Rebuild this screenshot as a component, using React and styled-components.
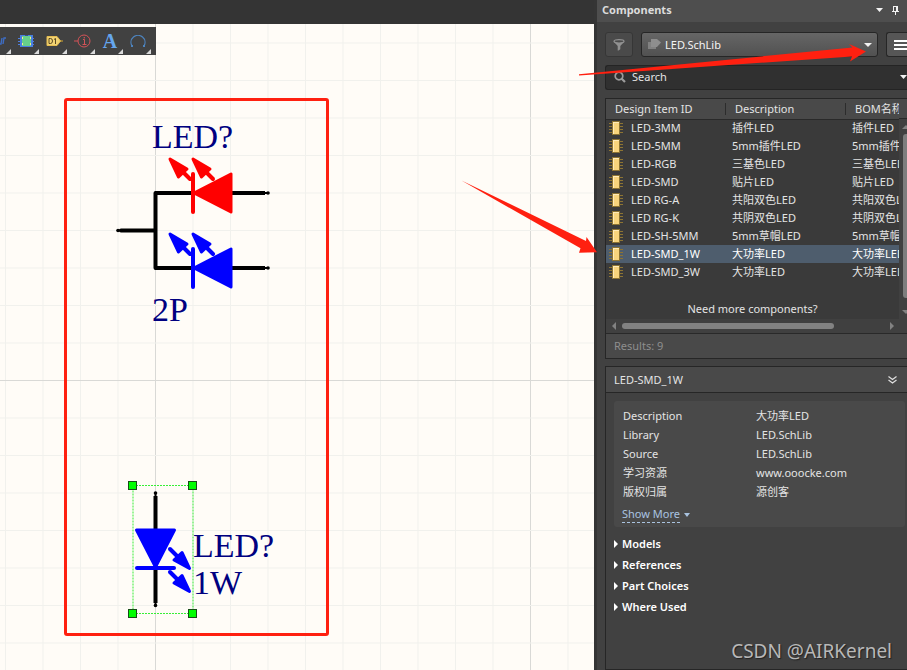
import React from "react";
import styled, { createGlobalStyle } from "styled-components";

const UI_FONT = '"Noto Sans", "Noto Sans CJK SC", sans-serif';

const GlobalStyle = createGlobalStyle`
  *, *::before, *::after { box-sizing: border-box; }
  body { margin: 0; background: #343434; font-family: ${UI_FONT}; }
  button, input, select { font: inherit; color: inherit; margin: 0; }
`;

const Page = styled.div`
  position: relative;
  display: grid;
  grid-template-columns: minmax(0, 1fr) 313px;
  min-height: 100vh;
  overflow: hidden;
  font-size: 11px;
  line-height: 18px;
  color: #e4e4e4;
`;

/* ---------- Editor ---------- */

const Editor = styled.main`
  display: flex;
  flex-direction: column;
  border-top: 24px solid #343434;
`;

const Canvas = styled.div`
  position: relative;
  flex: 1;
  overflow: hidden;
  background: #fffcf7;
`;

const Drawing = styled.svg`
  position: absolute;
  top: -24px;
  left: 0;
  width: 100%;
  height: calc(100% + 24px);

  text {
    font-family: "Liberation Serif", serif;
    font-size: 34px;
    fill: #000080;
  }
`;

const Toolbar = styled.div`
  position: absolute;
  top: 3px;
  left: 0;
  display: flex;
  height: 28px;
  padding-right: 4px;
  background: #414141;
`;

const Tool = styled.button`
  position: relative;
  display: flex;
  align-items: center;
  justify-content: ${(p) => (p.$clipped ? "flex-start" : "center")};
  width: ${(p) => (p.$clipped ? "12px" : "28px")};
  padding: 0;
  border: 0;
  background: none;
  overflow: hidden;

  &::after {
    content: "";
    position: absolute;
    right: 1px;
    bottom: 1px;
    border-left: 5px solid transparent;
    border-bottom: 5px solid #dadada;
  }
`;

/* ---------- Components panel ---------- */

const Panel = styled.aside`
  display: flex;
  flex-direction: column;
  min-width: 0;
  border-left: 3px solid #353535;
  background: #414141;
`;

const TitleBar = styled.header`
  display: flex;
  align-items: center;
  gap: 9px;
  height: 22px;
  padding: 0 8px 2px 5px;
  background: #4e4e4e;
`;

const Title = styled.h1`
  flex: 1;
  margin: 0;
  font-size: 11px;
  font-weight: 700;
  color: #dcdcdc;
`;

const PlainButton = styled.button`
  display: flex;
  padding: 0;
  border: 0;
  background: none;
`;

const Controls = styled.div`
  display: flex;
  gap: 8px;
  padding: 10px 0 8px 8px;
`;

const SquareButton = styled.button`
  display: flex;
  align-items: center;
  justify-content: ${(p) => (p.$cut ? "flex-start" : "center")};
  width: ${(p) => (p.$cut ? "21px" : "28px")};
  height: 25px;
  padding: ${(p) => (p.$cut ? "0 0 0 7px" : "0")};
  border: 1px solid ${(p) => (p.$cut ? "#262626" : "#363636")};
  border-right-width: ${(p) => (p.$cut ? "0" : "1px")};
  border-radius: ${(p) => (p.$cut ? "3px 0 0 3px" : "3px")};
  background: ${(p) => (p.$cut ? "#565656" : "#4a4a4a")};
`;

const LibraryBox = styled.label`
  position: relative;
  display: flex;
  align-items: center;
  flex: 1;
  height: 25px;
  border: 1px solid #262626;
  border-radius: 3px;
  background: linear-gradient(#666, #515151);

  > svg {
    position: absolute;
    left: 6px;
    pointer-events: none;
  }

  > svg:last-child {
    left: auto;
    right: 5px;
  }
`;

const LibrarySelect = styled.select`
  width: 100%;
  height: 100%;
  padding: 0 20px 0 23px;
  border: 0;
  appearance: none;
  background: transparent;
  color: #f4f4f4;
`;

const SearchBox = styled.label`
  display: flex;
  align-items: center;
  gap: 6px;
  height: 25px;
  margin-left: 8px;
  padding: 0 0 1px 8px;
  border: 1px solid #242424;
  border-right: 0;
  border-radius: 3px 0 0 3px;
  background: #303030;
  overflow: hidden;
`;

const SearchInput = styled.input`
  flex: 1;
  min-width: 0;
  padding: 0;
  border: 0;
  outline: 0;
  background: none;

  &::placeholder { color: #e4e4e4; opacity: 1; }
`;

const ListFrame = styled.section`
  display: flex;
  flex-direction: column;
  margin: 8px 0 7px 8px;
  border: 1px solid #262626;
  border-right: 0;
  background: #3a3a3a;
`;

const ListBody = styled.div`
  display: grid;
  grid-template-columns: minmax(0, 1fr) 8px;
`;

const ListMain = styled.div`
  min-width: 0;
`;

const ItemTable = styled.table`
  width: 100%;
  border-collapse: collapse;
  table-layout: fixed;
`;

const HeadCell = styled.th`
  position: relative;
  width: ${(p) => (p.$fill ? "auto" : "120px")};
  height: 20px;
  padding: 0 0 0 9px;
  border-bottom: 1px solid #292929;
  background: #494949;
  font-weight: 400;
  text-align: left;
  white-space: nowrap;
  overflow: hidden;

  &::after {
    content: "";
    position: absolute;
    top: 4px;
    right: 0;
    width: ${(p) => (p.$fill ? "0" : "1px")};
    height: 12px;
    background: #2c2c2c;
  }
`;

const ItemRow = styled.tr`
  background: ${(p) => (p.$selected ? "#4e5d6d" : "transparent")};
  color: ${(p) => (p.$selected ? "#fff" : "#e4e4e4")};
`;

const ItemCell = styled.td`
  height: 18px;
  padding: 0 0 0 6px;
  line-height: 16px;
  white-space: nowrap;
  overflow: hidden;
`;

const ItemName = styled.div`
  display: flex;
  align-items: center;
  gap: 8px;
  margin-left: -3px;
`;

const MoreNote = styled.p`
  margin: 19px 0 0;
  padding-bottom: 1px;
  text-align: center;
`;

const VerticalScroll = styled.div`
  display: flex;
  flex-direction: column;
  align-items: flex-start;
  padding: 26px 0 5px 3px;
  background: linear-gradient(#494949 0 19px, #292929 19px 20px, #404040 20px);
  overflow: hidden;
`;

const VerticalThumb = styled.div`
  flex: 1;
  width: 6px;
  margin: 5px 0 12px 1px;
  border-radius: 3px 0 0 3px;
  background: #7d7d7d;
`;

const HorizontalScroll = styled.div`
  display: flex;
  align-items: center;
  gap: 6px;
  height: 14px;
  padding: 0 13px 0 6px;
  background: #404040;
`;

const HorizontalTrack = styled.div`
  flex: 1;
`;

const HorizontalThumb = styled.div`
  width: 81%;
  height: 6px;
  border-radius: 3px;
  background: #828282;
`;

const Results = styled.div`
  height: 25px;
  padding: 3px 8px;
  border-top: 1px solid #292929;
  background: #494949;
  color: #8e8e8e;
`;

const Details = styled.section`
  flex: 1;
  margin-left: 8px;
  border: 1px solid #262626;
  border-right: 0;
`;

const DetailsHead = styled.header`
  display: flex;
  align-items: center;
  justify-content: space-between;
  height: 26px;
  padding: 0 10px 0 8px;
  border-bottom: 1px solid #262626;
  background: #494949;
`;

const DetailsTitle = styled.h2`
  margin: 0;
  font-size: 11px;
  font-weight: 400;
`;

const Card = styled.div`
  margin: 8px 2px 6px 8px;
  padding: 5px 8px 4px 9px;
  border-radius: 3px;
  background: #494949;
`;

const Properties = styled.dl`
  display: grid;
  grid-template-columns: 133px 1fr;
  grid-auto-rows: 19px;
  align-items: center;
  margin: 0;

  dd { margin: 0; }
`;

const ShowMore = styled.a`
  display: inline-flex;
  align-items: center;
  gap: 4px;
  margin: 5px 0 0 -1px;
  line-height: 16px;
  color: #a9c3e0;
  text-decoration: none;

  span { border-bottom: 1px dashed #a9c3e0; }
`;

const SectionButton = styled.button`
  display: flex;
  align-items: center;
  gap: 4px;
  width: 100%;
  height: 21px;
  padding: 0 0 0 8px;
  border: 0;
  background: none;
  font-weight: 600;
  color: #fff;
`;

/* ---------- Overlays ---------- */

const Annotations = styled.svg`
  position: absolute;
  top: 0;
  left: 0;
  width: 100%;
  height: 100%;
  pointer-events: none;
`;

const Watermark = styled.div`
  position: absolute;
  right: 15px;
  bottom: 5px;
  font-size: 19px;
  line-height: 28px;
  color: #b8b8b8;
  text-shadow: 1px 1px 1px #222;
`;

/* ---------- Icons ---------- */

const Caret = ({ width = 8, height = 4, color = "#f2f2f2", up }) => (
  <svg width={width} height={height} viewBox="0 0 8 4" preserveAspectRatio="none" aria-hidden="true">
    <path d={up ? "M0 4h8L4 0z" : "M0 0h8L4 4z"} fill={color} />
  </svg>
);

const SideArrow = ({ left, color = "#fff", width = 4, height = 8 }) => (
  <svg width={width} height={height} viewBox="0 0 4 8" aria-hidden="true">
    <path d={left ? "M4 0v8L0 4z" : "M0 0v8l4-4z"} fill={color} />
  </svg>
);

const ChipIcon = () => (
  <svg width="14" height="14" viewBox="0 0 14 14" shapeRendering="crispEdges" aria-hidden="true">
    <path d="M0 2.5h14M0 5.5h14M0 8.5h14M0 11.5h14" stroke="#8d7433" />
    <rect x="3" y="0" width="8" height="14" fill="#8d7433" />
    <rect x="4" y="1" width="6" height="12" fill="#f8d47c" />
    <path d="M4 1h6v1H5v11H4z" fill="#ffebb9" />
  </svg>
);

const PinIcon = () => (
  <svg width="7" height="9" viewBox="0 0 7 9" shapeRendering="crispEdges" aria-hidden="true">
    <path d="M1 0h5v5h1v1H4v3H3V6H0V5h1zM2 1v4h2V1z" fill="#f2f2f2" fillRule="evenodd" />
  </svg>
);

const BusIcon = () => (
  <svg width="8" height="16" viewBox="0 0 8 16" aria-hidden="true">
    <path d="M0 11h1l1-6M3 11l1-6h2" fill="none" stroke="#3e6dc4" strokeWidth="1.4" />
  </svg>
);

const PartIcon = () => (
  <svg width="16" height="12" viewBox="0 0 16 12" shapeRendering="crispEdges" aria-hidden="true">
    <path d="M0 3h16M0 6h16M0 9h16" stroke="#4e7fe0" />
    <rect x="2" y="0" width="13" height="12" fill="#4a7de2" />
    <rect x="4" y="1" width="9" height="10" fill="#67cf8b" />
    <path d="M4 2h1v2H4zM12 2h1v2h-1zM4 8h1v2H4zM12 8h1v2h-1z" fill="#f6ee87" />
    <path d="M7 0h3v1H7z" fill="#35508f" />
  </svg>
);

const PortIcon = () => (
  <svg width="17" height="10" viewBox="0 0 17 10" aria-hidden="true">
    <path d="M12 5h5" stroke="#d7a92e" />
    <path d="M1 .5h10L14.500 5 11 9.500H1z" fill="#f2d373" stroke="#e5bc50" />
    <path d="M3 2.500h1.500q2 0 2 2.500t-2 2.500H3zM8 3.500l1.500-1V8" fill="none" stroke="#5b4820" />
  </svg>
);

const DirectiveIcon = () => (
  <svg width="17" height="14" viewBox="0 0 17 14" aria-hidden="true">
    <circle cx="10" cy="7" r="6" fill="none" stroke="#d55358" />
    <path d="M0 7h4M9 5.500h1.500v5M8.500 10.500h4" fill="none" stroke="#d55358" />
    <circle cx="10.300" cy="3.700" r=".8" fill="#d55358" />
  </svg>
);

const Letter = styled.span`
  font: 700 20px/24px "Liberation Serif", serif;
  color: #65a6ee;
`;

const ArcIcon = () => (
  <svg width="16" height="12" viewBox="0 0 16 12" aria-hidden="true">
    <path d="M2 11A7 7 0 1 1 14 11" fill="none" stroke="#4d83bd" strokeWidth="1.200" />
    <path d="M1 10h2v2H1zM13 10h2v2h-2z" fill="#4d83bd" />
  </svg>
);

const FilterIcon = () => (
  <svg width="12" height="12" viewBox="0 0 12 12" aria-hidden="true">
    <path d="M.6 2.500L4.700 7v4.500h.8l1.800-1.300V7l4.100-4.500z" fill="#919191" />
    <ellipse cx="6" cy="2.300" rx="5" ry="1.700" fill="#4a4a4a" stroke="#919191" strokeWidth="1.200" />
  </svg>
);

const LibraryIcon = () => (
  <svg width="13" height="11" viewBox="0 0 13 11" aria-hidden="true">
    <path d="M0 3h8v7H0z" fill="#818181" />
    <path d="M3 0h6l4 3.500L9 8H3z" fill="#8e8e8e" />
  </svg>
);

const MenuIcon = () => (
  <svg width="13" height="10" viewBox="0 0 13 10" shapeRendering="crispEdges" aria-hidden="true">
    <path d="M0 1h13M0 5h13M0 9h13" stroke="#fff" strokeWidth="2" />
  </svg>
);

const SearchIcon = () => (
  <svg width="12" height="12" viewBox="0 0 12 12" aria-hidden="true">
    <circle cx="5" cy="5" r="3.800" fill="none" stroke="#9c9c9c" strokeWidth="1.700" />
    <path d="M7.500 7.500l3.500 3.500" stroke="#9c9c9c" strokeWidth="2.200" />
  </svg>
);

const ChevronsIcon = () => (
  <svg width="9" height="8" viewBox="0 0 9 8" aria-hidden="true">
    <path d="M.5.500l4 3 4-3M.5 4l4 3 4-3" fill="none" stroke="#e0e0e0" strokeWidth="1.200" />
  </svg>
);

/* ---------- Schematic ---------- */

const PITCH = 37.5;
const verticals = Array.from({ length: 60 }, (_, i) => ({ at: 5.5 + i * PITCH, major: i % 10 === 4 }));
const horizontals = Array.from({ length: 40 }, (_, i) => ({ at: 5.5 + i * PITCH, major: i % 10 === 0 && i > 0 }));
const gridColor = (major) => (major ? "#d9d9d6" : "#f1f1ed");

const LightArrow = ({ x, y, color }) => (
  <g transform={`translate(${x} ${y})`} fill={color} stroke={color} strokeLinecap="round" strokeLinejoin="round">
    <path d="M2 2l17 10-8.500 8z" strokeWidth="3" />
    <path d="M14 14l8 8" strokeWidth="4" />
  </g>
);

const HorizontalDiode = ({ y, color }) => (
  <g>
    <path d={`M155 ${y}h38M232 ${y}h33`} stroke="#000" strokeWidth="4" />
    <path d={`M264 ${y}h4`} stroke="#000" strokeWidth="2" />
    <circle cx="268" cy={y} r="1.800" />
    <path d={`M194 ${y}l37-19v38z`} fill={color} stroke={color} strokeWidth="3" strokeLinejoin="round" />
    <path d={`M193 ${y - 19}v38`} stroke={color} strokeWidth="4" strokeLinecap="round" />
    <LightArrow x={168} y={y - 36} color={color} />
    <LightArrow x={191} y={y - 36} color={color} />
  </g>
);

const DownArrow = ({ y }) => (
  <g transform={`translate(170 ${y})`} fill="#00f" stroke="#00f" strokeLinecap="round" strokeLinejoin="round">
    <path d="M0 0l7 7" strokeWidth="4" />
    <path d="M19.500 19.500L4 11l8-7.500z" strokeWidth="3" />
  </g>
);

const handles = [[133, 485], [193, 485], [133, 613], [193, 613]];

const Schematic = () => (
  <Drawing role="img" aria-label="LED schematic symbols">
    {verticals.map((l) => (
      <path key={`v${l.at}`} d={`M${l.at} 0v2000`} stroke={gridColor(l.major)} />
    ))}
    {horizontals.map((l) => (
      <path key={`h${l.at}`} d={`M0 ${l.at}h3000`} stroke={gridColor(l.major)} />
    ))}

    <rect x="65.500" y="99.500" width="262" height="535" rx="1.500" fill="none" stroke="#ff2010" strokeWidth="3" />

    <text x="152" y="148">LED?</text>
    <path d="M155.500 193v75M155 230.500h-34" fill="none" stroke="#000" strokeWidth="4" strokeLinecap="round" />
    <path d="M122 230.500h-4" stroke="#000" strokeWidth="2" />
    <circle cx="118" cy="230.500" r="1.800" />
    <HorizontalDiode y={193} color="#f00" />
    <HorizontalDiode y={268} color="#00f" />
    <text x="152" y="321">2P</text>

    <path d="M155.500 496v34M155.500 568v35" stroke="#000" strokeWidth="4" />
    <path d="M155.500 493v112" stroke="#000" strokeWidth="2" />
    <circle cx="155.500" cy="493" r="1.800" />
    <circle cx="155.500" cy="605.500" r="1.800" />
    <path d="M136.500 530h38l-19 37z" fill="#00f" stroke="#00f" strokeWidth="3" strokeLinejoin="round" />
    <path d="M137 568h37" stroke="#00f" strokeWidth="4" strokeLinecap="round" />
    <DownArrow y={549} />
    <DownArrow y={572} />
    <text x="193" y="557">LED?</text>
    <text x="193" y="594">1W</text>
    <rect x="133" y="485.500" width="60" height="128" fill="none" stroke="#38ee38" strokeDasharray="2 1" />
    {handles.map(([x, y]) => (
      <rect key={`${x}-${y}`} x={x - 4.5} y={y - 3.5} width="8" height="8" fill="#0f0" stroke="#174d17" />
    ))}
  </Drawing>
);

/* ---------- Data ---------- */

const items = [
  ["LED-3MM", "插件LED"],
  ["LED-5MM", "5mm插件LED"],
  ["LED-RGB", "三基色LED"],
  ["LED-SMD", "贴片LED"],
  ["LED RG-A", "共阳双色LED"],
  ["LED RG-K", "共阴双色LED"],
  ["LED-SH-5MM", "5mm草帽LED"],
  ["LED-SMD_1W", "大功率LED"],
  ["LED-SMD_3W", "大功率LED"],
];

const properties = [
  ["Description", "大功率LED"],
  ["Library", "LED.SchLib"],
  ["Source", "LED.SchLib"],
  ["学习资源", "www.ooocke.com"],
  ["版权归属", "源创客"],
];

const sections = ["Models", "References", "Part Choices", "Where Used"];

export default function App() {
  return (
    <>
      <GlobalStyle />
      <Page>
        <Editor>
          <Canvas>
            <Schematic />
            <Toolbar>
              <Tool $clipped aria-label="Bus"><BusIcon /></Tool>
              <Tool aria-label="Part"><PartIcon /></Tool>
              <Tool aria-label="Port"><PortIcon /></Tool>
              <Tool aria-label="Directive"><DirectiveIcon /></Tool>
              <Tool aria-label="Text"><Letter>A</Letter></Tool>
              <Tool aria-label="Arc"><ArcIcon /></Tool>
            </Toolbar>
          </Canvas>
        </Editor>

        <Panel>
          <TitleBar>
            <Title>Components</Title>
            <PlainButton aria-label="Panel menu"><Caret width={7} /></PlainButton>
            <PlainButton aria-label="Pin panel"><PinIcon /></PlainButton>
          </TitleBar>

          <Controls>
            <SquareButton aria-label="Filter"><FilterIcon /></SquareButton>
            <LibraryBox>
              <LibraryIcon />
              <LibrarySelect aria-label="Library" defaultValue="LED.SchLib">
                <option>LED.SchLib</option>
              </LibrarySelect>
              <Caret />
            </LibraryBox>
            <SquareButton $cut aria-label="Options"><MenuIcon /></SquareButton>
          </Controls>

          <SearchBox>
            <SearchIcon />
            <SearchInput type="text" placeholder="Search" aria-label="Search" />
            <Caret width={7} />
          </SearchBox>

          <ListFrame>
            <ListBody>
              <ListMain>
                <ItemTable>
                  <thead>
                    <tr>
                      <HeadCell>Design Item ID</HeadCell>
                      <HeadCell>Description</HeadCell>
                      <HeadCell $fill>BOM名称</HeadCell>
                    </tr>
                  </thead>
                  <tbody>
                    {items.map(([name, text]) => (
                      <ItemRow key={name} $selected={name === "LED-SMD_1W"}>
                        <ItemCell><ItemName><ChipIcon />{name}</ItemName></ItemCell>
                        <ItemCell>{text}</ItemCell>
                        <ItemCell>{text}</ItemCell>
                      </ItemRow>
                    ))}
                  </tbody>
                </ItemTable>
                <MoreNote>Need more components?</MoreNote>
              </ListMain>
              <VerticalScroll>
                <Caret up color="#828282" />
                <VerticalThumb />
                <Caret color="#828282" />
              </VerticalScroll>
            </ListBody>
            <HorizontalScroll>
              <SideArrow left color="#828282" />
              <HorizontalTrack><HorizontalThumb /></HorizontalTrack>
              <SideArrow color="#828282" />
            </HorizontalScroll>
            <Results>Results: 9</Results>
          </ListFrame>

          <Details>
            <DetailsHead>
              <DetailsTitle>LED-SMD_1W</DetailsTitle>
              <PlainButton aria-label="Collapse details"><ChevronsIcon /></PlainButton>
            </DetailsHead>
            <Card>
              <Properties>
                {properties.map(([label, value]) => (
                  <React.Fragment key={label}>
                    <dt>{label}</dt>
                    <dd>{value}</dd>
                  </React.Fragment>
                ))}
              </Properties>
              <ShowMore href="#more">
                <span>Show More</span>
                <Caret width={6} color="#a9c3e0" />
              </ShowMore>
            </Card>
            {sections.map((name) => (
              <SectionButton key={name}><SideArrow />{name}</SectionButton>
            ))}
          </Details>
        </Panel>

        <Annotations aria-hidden="true">
          <path d="M579 74.300L852.500 47.500l-3.500-3.500L866 51.500 850 61.500l2-5L579 75.500z" fill="#ff2010" />
          <path d="M461.500 180.500L586 241l.5-4L597 252.300l-18 .5 1.500-4.500z" fill="#ff2010" />
        </Annotations>
        <Watermark>CSDN @AIRKernel</Watermark>
      </Page>
    </>
  );
}
